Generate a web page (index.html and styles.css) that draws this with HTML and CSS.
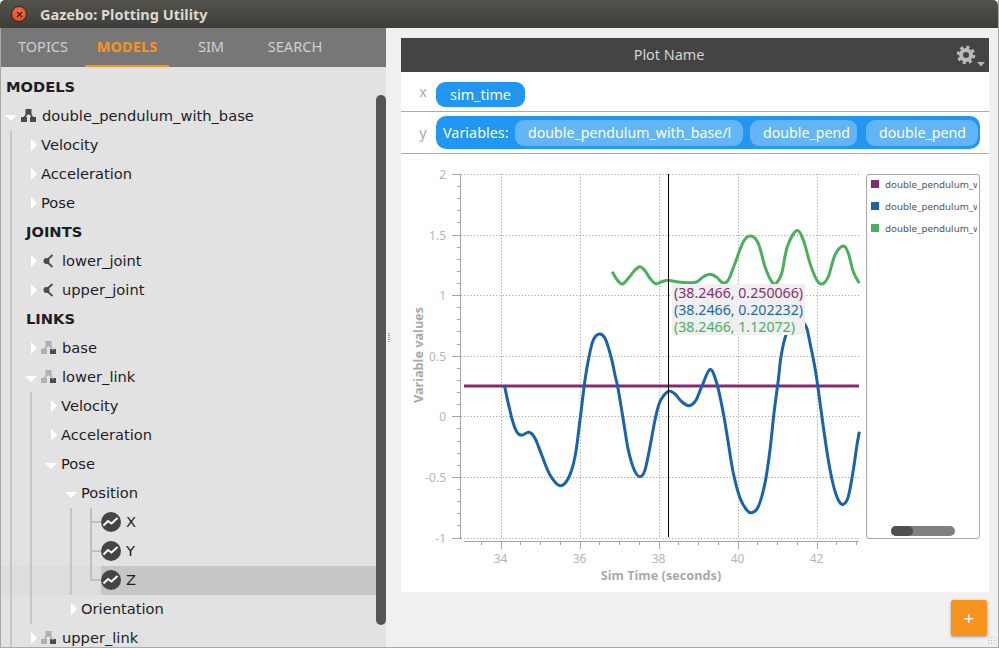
FILE: index.html
```html
<!DOCTYPE html>
<html lang="en">
<head>
  <meta charset="UTF-8">
  <title>Gazebo: Plotting Utility</title>
  <link rel="stylesheet" href="styles.css">
</head>
<body>
  <div class="window">
    <div class="titlebar">
      <span class="close-btn">
        <svg width="7" height="7" viewBox="0 0 7 7"><path d="M1 1L6 6M6 1L1 6" stroke="#4a1206" stroke-width="1.2"/></svg>
      </span>
      <span class="title">Gazebo: Plotting Utility</span>
    </div>

    <div class="content">
      <!-- left palette -->
      <div class="palette">
        <div class="tabs">
          <div class="tab">TOPICS</div>
          <div class="tab active">MODELS</div>
          <div class="tab">SIM</div>
          <div class="tab">SEARCH</div>
        </div>
        <div class="tree">
          <div class="row heading">MODELS</div>
          <div class="row model-row">
            <span class="arrow-down"></span>
            <svg class="icon" width="15" height="13" viewBox="0 0 15 13"><use href="#model-icon"/></svg>
            <span>double_pendulum_with_base</span>
          </div>
          <div class="kids">
            <div class="row leaf"><span class="arrow-right"></span><span>Velocity</span></div>
            <div class="row leaf"><span class="arrow-right"></span><span>Acceleration</span></div>
            <div class="row leaf"><span class="arrow-right"></span><span>Pose</span></div>
            <div class="row heading sub">JOINTS</div>
            <div class="row leaf with-icon">
              <span class="arrow-right"></span>
              <svg class="icon joint" width="11" height="14" viewBox="0 0 11 14"><use href="#joint-icon"/></svg>
              <span>lower_joint</span>
            </div>
            <div class="row leaf with-icon">
              <span class="arrow-right"></span>
              <svg class="icon joint" width="11" height="14" viewBox="0 0 11 14"><use href="#joint-icon"/></svg>
              <span>upper_joint</span>
            </div>
            <div class="row heading sub">LINKS</div>
            <div class="row leaf with-icon">
              <span class="arrow-right"></span>
              <svg class="icon" width="15" height="13" viewBox="0 0 15 13"><use href="#link-icon"/></svg>
              <span>base</span>
            </div>
            <div class="row open with-icon">
              <span class="arrow-down"></span>
              <svg class="icon" width="15" height="13" viewBox="0 0 15 13"><use href="#link-icon"/></svg>
              <span>lower_link</span>
            </div>
            <div class="kids inner">
              <div class="row leaf"><span class="arrow-right"></span><span>Velocity</span></div>
              <div class="row leaf"><span class="arrow-right"></span><span>Acceleration</span></div>
              <div class="row open"><span class="arrow-down"></span><span>Pose</span></div>
              <div class="indent">
                <div class="row open"><span class="arrow-down"></span><span>Position</span></div>
                <div class="kids inner">
                  <div class="plot-rows">
                    <div class="plot-row">
                      <div class="plot-item">
                        <svg class="plot-icon" width="20" height="20" viewBox="0 0 20 20"><use href="#plot-icon"/></svg>
                        <span>X</span>
                      </div>
                    </div>
                    <div class="plot-row">
                      <div class="plot-item">
                        <svg class="plot-icon" width="20" height="20" viewBox="0 0 20 20"><use href="#plot-icon"/></svg>
                        <span>Y</span>
                      </div>
                    </div>
                    <div class="plot-row last">
                      <div class="plot-item selected">
                        <svg class="plot-icon" width="20" height="20" viewBox="0 0 20 20"><use href="#plot-icon"/></svg>
                        <span>Z</span>
                      </div>
                    </div>
                  </div>
                </div>
                <div class="row leaf"><span class="arrow-right"></span><span>Orientation</span></div>
              </div>
            </div>
            <div class="row leaf with-icon">
              <span class="arrow-right"></span>
              <svg class="icon" width="15" height="13" viewBox="0 0 15 13"><use href="#link-icon"/></svg>
              <span>upper_link</span>
            </div>
          </div>
          <div class="tree-scroll"></div>
        </div>
      </div>

      <div class="splitter"><span class="grip"></span></div>

      <!-- plot canvas -->
      <div class="plot-area">
        <div class="plot-panel">
          <div class="plot-header">
            <div class="plot-name">Plot Name</div>
            <svg class="gear" width="52" height="34" viewBox="937 38 52 34">
              <circle cx="966" cy="55" r="5" fill="none" stroke="#b9b9b9" stroke-width="4"/>
              <circle cx="966" cy="55" r="7.8" fill="none" stroke="#b9b9b9" stroke-width="3" stroke-dasharray="3.2 2.93"/>
              <polygon points="977,62 985,62 981,66.5" fill="#b9b9b9"/>
            </svg>
          </div>
          <div class="var-row x-row">
            <span class="axis-name">x</span>
            <div class="pill">sim_time</div>
          </div>
          <div class="var-row y-row">
            <span class="axis-name">y</span>
            <div class="pill vars">
              <span class="vars-label">Variables:</span>
              <span class="var-chip first">double_pendulum_with_base/l</span>
              <span class="var-chip second">double_pend</span>
              <span class="var-chip third">double_pend</span>
            </div>
          </div>
          <div class="chart-row">
            <div class="chart">
              <svg id="plot" width="460" height="438" viewBox="401 154 460 438"></svg>
              <div class="tracker">
                <div class="c-purple">(38.2466, 0.250066)</div>
                <div class="c-blue">(38.2466, 0.202232)</div>
                <div class="c-green">(38.2466, 1.12072)</div>
              </div>
            </div>
            <div class="legend">
              <div class="legend-item"><span class="swatch bg-purple"></span><span class="legend-text">double_pendulum_with_base</span></div>
              <div class="legend-item"><span class="swatch bg-blue"></span><span class="legend-text">double_pendulum_with_base</span></div>
              <div class="legend-item"><span class="swatch bg-green"></span><span class="legend-text">double_pendulum_with_base</span></div>
              <div class="legend-scroll"><span class="legend-thumb"></span></div>
            </div>
          </div>
        </div>
        <div class="plot-footer">
          <button class="add-btn">+</button>
        </div>
      </div>
    </div>
    <span class="resize-grip"></span>
  </div>

  <!-- icon defs -->
  <svg class="defs" width="0" height="0">
    <defs>
      <g id="model-icon" fill="#4a4a4a">
        <rect x="4.5" y="0" width="6" height="5.5"/>
        <rect x="0" y="8" width="6" height="5"/>
        <rect x="9" y="8" width="6" height="5"/>
        <path d="M6.5 4L3 9M8.5 4L12 9" stroke="#4a4a4a" stroke-width="1.6"/>
      </g>
      <g id="link-icon">
        <rect x="4.5" y="0" width="6" height="5.5" fill="#b0b0b0"/>
        <rect x="0" y="8" width="6" height="5" fill="#b0b0b0"/>
        <rect x="9" y="8" width="6" height="5" fill="#4a4a4a"/>
        <path d="M6.5 4L3 9M8.5 4L12 9" stroke="#b0b0b0" stroke-width="1.6"/>
      </g>
      <g id="joint-icon">
        <path d="M9.5 1L3 7L9.5 13" fill="none" stroke="#4a4a4a" stroke-width="1.8"/>
        <circle cx="3.5" cy="7" r="3" fill="#4a4a4a"/>
      </g>
      <g id="plot-icon">
        <circle cx="10" cy="10" r="10" fill="#454545"/>
        <path d="M2.5 13.5L7 9L10.5 11.5L16.5 6" fill="none" stroke="#fff" stroke-width="2"/>
      </g>
    </defs>
  </svg>

  <script src="plot.js"></script>
</body>
</html>
```

FILE: styles.css
```css
* {
  box-sizing: border-box;
}
html, body {
  margin: 0;
  height: 100%;
}
body {
  font-family: "Noto Sans", sans-serif;
  background-color: #f0f0f0;
  overflow: hidden;
}
.window {
  position: relative;
  width: 999px;
  height: 648px;
  display: flex;
  flex-direction: column;
  border-right: 1px solid #a8a8a8;
  border-bottom: 1px solid #a8a8a8;
  overflow: hidden;
}
.defs {
  position: absolute;
}

/* title bar */
.titlebar {
  height: 28px;
  flex: none;
  display: flex;
  align-items: center;
  padding-left: 11px;
  background: linear-gradient(#54524d, #3e3d39);
  border-radius: 5px 5px 0 0;
}
.close-btn {
  width: 16px;
  height: 16px;
  border-radius: 50%;
  display: flex;
  align-items: center;
  justify-content: center;
  background: radial-gradient(circle at 50% 35%, #f2764a, #d9421a);
  border: 1px solid #3a2a20;
}
.title {
  margin-left: 13px;
  font-size: 14.5px;
  font-weight: 700;
  color: #dcd8cf;
}

.content {
  flex: 1;
  display: flex;
  min-height: 0;
}

/* left palette */
.palette {
  width: 386px;
  flex: none;
  display: flex;
  flex-direction: column;
  border-left: 1px solid #a8a8a8;
}
.tabs {
  height: 39px;
  flex: none;
  display: flex;
  background: #777777;
}
.tab {
  width: 84px;
  height: 39px;
  line-height: 37px;
  text-align: center;
  font-size: 14.6px;
  color: #cfcfcf;
}
.tab.active {
  color: #f7941d;
  font-weight: 700;
  border-bottom: 2px solid #f7941d;
}
.tree {
  position: relative;
  flex: 1;
  padding-top: 6px;
  background: #e2e2e2;
  overflow: hidden;
  isolation: isolate;
  font-family: "DejaVu Sans", sans-serif;
  font-size: 14.67px;
  color: #1d1d26;
}
.row {
  height: 29px;
  padding-bottom: 2px;
  display: flex;
  align-items: center;
  white-space: nowrap;
}
.heading {
  font-weight: 700;
  padding-left: 5px;
}
.heading.sub {
  padding-left: 14px;
}
.model-row {
  padding-left: 4px;
}
.model-row .arrow-down {
  margin-right: 4px;
}
.model-row .icon {
  margin-right: 6px;
}
.leaf {
  padding-left: 19px;
}
.leaf .arrow-right {
  margin-right: 4px;
}
.open {
  padding-left: 13px;
}
.open .arrow-down {
  margin-right: 4px;
}
.with-icon .icon {
  margin-right: 6px;
}
.with-icon .icon.joint {
  margin-left: 2px;
  margin-right: 8px;
}
.arrow-right {
  width: 0;
  height: 0;
  flex: none;
  border-left: 6px solid #fff;
  border-top: 6px solid transparent;
  border-bottom: 6px solid transparent;
}
.arrow-down {
  width: 0;
  height: 0;
  flex: none;
  margin-top: 4px;
  border-top: 6px solid #fff;
  border-left: 6px solid transparent;
  border-right: 6px solid transparent;
}
.kids {
  margin-left: 9px;
  border-left: 2px solid #c9c6c2;
}
.kids.inner {
  margin-left: 18px;
}
.indent {
  margin-left: 20px;
}
.plot-rows {
  margin-left: 18px;
}
.plot-row {
  position: relative;
  padding-left: 11px;
}
.plot-row::before {
  content: "";
  position: absolute;
  left: 0;
  top: 0;
  width: 2px;
  height: 100%;
  background: #c2bfbb;
}
.plot-row.last::before {
  height: 15px;
}
.plot-row::after {
  content: "";
  position: absolute;
  left: 0;
  top: 13px;
  width: 11px;
  height: 2px;
  background: #c2bfbb;
}
.plot-item {
  height: 29px;
  padding-bottom: 2px;
  display: flex;
  align-items: center;
}
.plot-item.selected {
  background: #c6c6c6;
  margin-right: -10px;
}
.plot-item.selected::before {
  content: "";
  position: absolute;
  z-index: -1;
  left: -100px;
  top: 0;
  width: 111px;
  height: 29px;
  background: #dddddd;
}
.plot-icon {
  flex: none;
  margin-right: 5px;
}
.tree-scroll {
  position: absolute;
  left: 375px;
  top: 28px;
  width: 10px;
  height: 530px;
  border-radius: 5px;
  background: #555555;
}

.splitter {
  width: 15px;
  flex: none;
  display: flex;
  align-items: center;
  justify-content: flex-start;
  padding-left: 2px;
}
.grip {
  width: 2px;
  height: 9px;
  background: repeating-linear-gradient(#9a9a9a 0 1px, transparent 1px 2px);
}

/* plot canvas */
.plot-area {
  flex: 1;
  display: flex;
  flex-direction: column;
  padding: 10px 9px 0 0;
}
.plot-panel {
  height: 554px;
  background: #fff;
  display: flex;
  flex-direction: column;
}
.plot-header {
  height: 34px;
  flex: none;
  display: flex;
  align-items: center;
  background: #444444;
}
.plot-name {
  flex: 1;
  padding-bottom: 2px;
  text-align: center;
  font-size: 14.4px;
  color: #d4d4d4;
}
.gear {
  flex: none;
}
.var-row {
  flex: none;
  display: flex;
  align-items: center;
  border-bottom: 1px solid #ababab;
  font-size: 14.4px;
}
.x-row {
  height: 40px;
}
.y-row {
  height: 42px;
}
.axis-name {
  width: 35px;
  flex: none;
  padding-left: 9px;
  text-align: center;
  color: #aaaaaa;
}
.pill {
  height: 25px;
  line-height: 25px;
  padding: 0 13px;
  border-radius: 9px;
  background: #2196f3;
  color: #fff;
  margin-top: 6px;
}
.x-row .pill {
  width: 89px;
  padding: 0;
  text-align: center;
}
.pill.vars {
  width: 544px;
  height: 33px;
  margin-top: 0;
  padding: 0 0 0 7px;
  display: flex;
  align-items: center;
  border-radius: 10px;
}
.vars-label {
  width: 72px;
  flex: none;
}
.var-chip {
  height: 26px;
  line-height: 26px;
  padding-left: 13px;
  overflow: hidden;
  white-space: nowrap;
  border-radius: 9px;
  background: #64b5f6;
  font-size: 14.2px;
}
.var-chip.first {
  width: 228px;
}
.var-chip.second {
  width: 107px;
  margin-left: 7px;
}
.var-chip.third {
  width: 112px;
  margin-left: 9px;
}
.chart-row {
  flex: 1;
  display: flex;
  min-height: 0;
}
.chart {
  position: relative;
  width: 460px;
  flex: none;
}
.chart svg {
  display: block;
}
.tick-label {
  font-size: 12px;
  fill: #b5b5b5;
}
.axis-title {
  font-size: 12.7px;
  font-weight: 700;
  fill: #a9a9a9;
}
.tracker {
  position: absolute;
  left: 271px;
  top: 130px;
  width: 133px;
  height: 51px;
  padding-left: 2px;
  background: #f0f0f0;
  font-size: 14.2px;
  line-height: 17px;
  white-space: nowrap;
}
.c-purple {
  color: #8a2c70;
}
.c-blue {
  color: #1a68b8;
}
.c-green {
  color: #4cae60;
}
.legend {
  position: relative;
  width: 114px;
  height: 365px;
  margin: 20px 0 0 5px;
  padding: 0 2px 0 4px;
  border: 1px solid #a8a8a8;
  border-radius: 3px;
  overflow: hidden;
}
.legend-item {
  height: 18px;
  margin-bottom: 4px;
  display: flex;
  align-items: center;
  white-space: nowrap;
  overflow: hidden;
  font-size: 9.8px;
  color: #555555;
}
.swatch {
  width: 8px;
  height: 8px;
  flex: none;
  margin-right: 6px;
}
.bg-purple {
  background: #862a6e;
}
.bg-blue {
  background: #1a62ac;
}
.bg-green {
  background: #4cae60;
}
.legend-scroll {
  position: absolute;
  left: 24px;
  bottom: 2px;
  width: 64px;
  height: 10px;
  border-radius: 5px;
  background: #808080;
}
.legend-thumb {
  display: block;
  width: 22px;
  height: 10px;
  border-radius: 5px;
  background: #505050;
}
.plot-footer {
  display: flex;
  justify-content: flex-end;
  padding: 8px 2px 0 0;
}
.add-btn {
  width: 36px;
  height: 36px;
  padding: 0;
  border: none;
  border-radius: 2px;
  background: #f7931e;
  color: #fff;
  font-family: "Noto Sans", sans-serif;
  font-size: 18px;
  box-shadow: 0 1px 3px rgba(0, 0, 0, 0.35);
}
.resize-grip {
  position: absolute;
  right: 1px;
  bottom: 1px;
  width: 10px;
  height: 10px;
  background: radial-gradient(circle, #bdbdbd 0.7px, transparent 1px) 0 0 / 3px 3px;
}
```

FILE: plot.js
```js
// px position of plot values
const toX = t => 500.7 + 39.5 * (t - 34);
const toY = v => 416.3 - 121.2 * v;
const svg = document.getElementById('plot');
const NS = 'http://www.w3.org/2000/svg';

function add(tag, attrs, text) {
  const el = document.createElementNS(NS, tag);
  for (const key in attrs) el.setAttribute(key, attrs[key]);
  if (text) el.textContent = text;
  svg.appendChild(el);
  return el;
}

function line(x1, y1, x2, y2, stroke, extra) {
  add('line', Object.assign({ x1, y1, x2, y2, stroke }, extra));
}

const dotted = { 'stroke-dasharray': '1 2.2' };

// grid and y axis
[2, 1.5, 1, 0.5, 0, -0.5, -1].forEach(v => {
  const y = Math.round(toY(v)) + 0.5;
  line(461, y, 859, y, '#999', dotted);
  line(452, y, 461, y, '#a6a6a6');
  add('text', { x: 446, y: y + 4, 'text-anchor': 'end', class: 'tick-label' }, String(v));
});
for (let v = -0.9; v < 2; v += 0.1) {
  if (Math.abs(v * 2 - Math.round(v * 2)) < 0.01) continue;
  const y = Math.round(toY(v)) + 0.5;
  line(457, y, 461, y, '#a6a6a6');
}
line(460.5, 174, 460.5, 538, '#a6a6a6');

// grid and x axis
[34, 36, 38, 40, 42].forEach(t => {
  const x = Math.round(toX(t)) + 0.5;
  line(x, 174, x, 537, '#999', dotted);
  line(x, 541, x, 549, '#a6a6a6');
  add('text', { x: x - 1, y: 563, 'text-anchor': 'middle', class: 'tick-label' }, String(t));
});
for (let t = 33.5; t < 43.2; t += 0.5) {
  if (t % 2 === 0) continue;
  const x = Math.round(toX(t)) + 0.5;
  line(x, 541, x, 545, '#a6a6a6');
}
line(464, 541.5, 859, 541.5, '#a6a6a6');

add('text', { x: 661, y: 580, 'text-anchor': 'middle', class: 'axis-title' }, 'Sim Time (seconds)');
add('text', { x: 0, y: 0, 'text-anchor': 'middle', class: 'axis-title', transform: 'translate(423 355) rotate(-90)' }, 'Variable values');

// smooth a list of points into a path
function smooth(pts) {
  let d = `M${pts[0][0]} ${pts[0][1]}`;
  for (let i = 0; i < pts.length - 1; i++) {
    const p0 = pts[i - 1] || pts[i];
    const p1 = pts[i];
    const p2 = pts[i + 1];
    const p3 = pts[i + 2] || p2;
    const c1 = [p1[0] + (p2[0] - p0[0]) / 6, p1[1] + (p2[1] - p0[1]) / 6];
    const c2 = [p2[0] - (p3[0] - p1[0]) / 6, p2[1] - (p3[1] - p1[1]) / 6];
    d += `C${c1[0]} ${c1[1]} ${c2[0]} ${c2[1]} ${p2[0]} ${p2[1]}`;
  }
  return d;
}

const green = [[612.3, 271.7], [616.7, 279.3], [622.3, 284], [628.3, 278.3], [635, 270], [640, 266.7], [645, 270.7], [650, 278.3], [655.7, 283.7], [661.7, 281.7], [668.3, 280.3], [678.3, 282], [688.3, 282.7], [696.7, 282], [703, 277], [710, 274.3], [716.7, 277.3], [722.7, 283], [728.3, 280], [735, 263.3], [743.3, 241.7], [750.7, 236], [758.3, 243.3], [765, 266.7], [771.7, 281.7], [776, 283.3], [781.7, 273.3], [787.3, 246.7], [796.7, 230.7], [803.3, 240], [810, 263.3], [816.7, 280], [822.3, 284], [828.3, 276.7], [835, 255], [843.3, 246], [848.3, 253.3], [853.3, 271.7], [859.3, 283.3]];

const blue = [[504.3, 385], [508.3, 403.3], [512.3, 420], [516.7, 431.7], [521.7, 435.3], [529, 432.3], [535, 438.3], [541.7, 455], [550, 475], [560, 485.7], [568.3, 478.3], [575, 456.7], [580, 420], [585, 380], [589, 356.7], [593.3, 340], [599.3, 334], [605, 338.3], [611, 356.7], [615, 375], [618.3, 390], [623.3, 420], [628.3, 450], [634.3, 470], [640, 476.7], [645, 470], [650, 446.7], [655, 420], [660, 401.7], [668.3, 391.3], [675, 394], [681.7, 401.7], [689, 405.7], [695.7, 400.7], [701.7, 386.7], [710, 369.5], [716.7, 383], [723.3, 413], [728.3, 443], [733.3, 473], [740, 498], [746.7, 510], [751.7, 512.7], [758.3, 506.7], [765, 483], [770, 450], [774, 413], [778.3, 380], [781, 356.7], [786, 335], [796, 318], [805.7, 325.7], [810, 343], [815, 368], [818.3, 390], [823.3, 426.7], [828.3, 460], [833.3, 485], [838.3, 500], [843.3, 504.3], [848.3, 496.7], [853.3, 470], [856.7, 446.7], [859.3, 431.7]];

line(464, 386, 859, 386, '#862a6e', { 'stroke-width': 3 });
add('path', { d: smooth(green), fill: 'none', stroke: '#4cae60', 'stroke-width': 3 });
add('path', { d: smooth(blue), fill: 'none', stroke: '#1a62ac', 'stroke-width': 3 });

// tracker line
line(668.5, 174, 668.5, 537, '#000');
```
